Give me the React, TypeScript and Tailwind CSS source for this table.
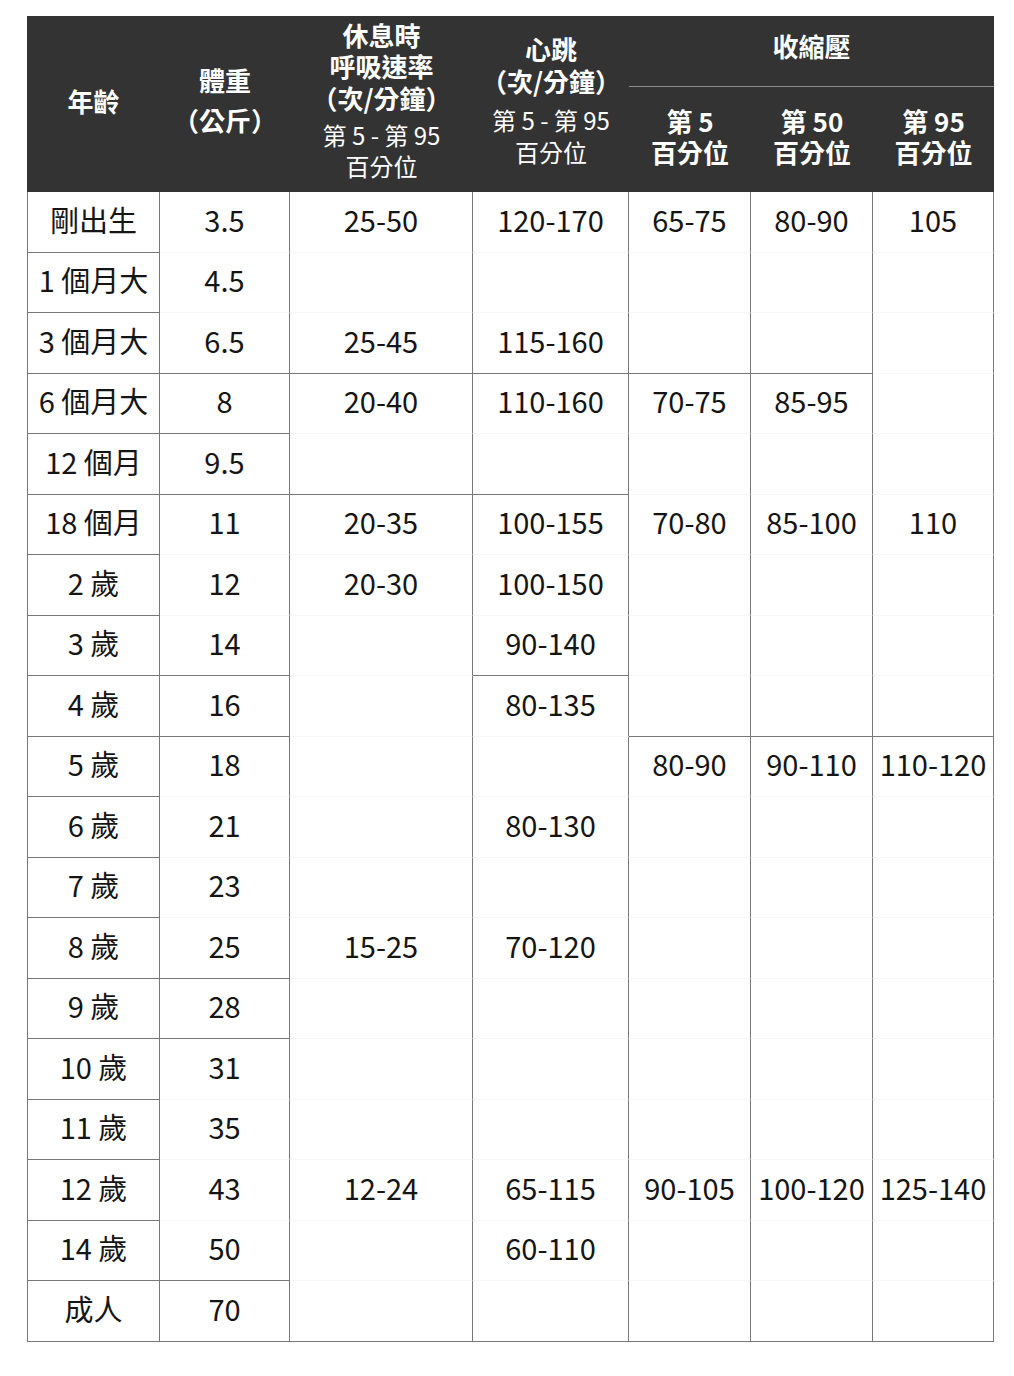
import React from 'react'

type Col = { vals: Record<number, string>; borders: number[] }

const ages = ['剛出生', '1 個月大', '3 個月大', '6 個月大', '12 個月', '18 個月', '2 歲', '3 歲', '4 歲', '5 歲', '6 歲', '7 歲', '8 歲', '9 歲', '10 歲', '11 歲', '12 歲', '14 歲', '成人']
const weights = ['3.5', '4.5', '6.5', '8', '9.5', '11', '12', '14', '16', '18', '21', '23', '25', '28', '31', '35', '43', '50', '70']

const columns: Col[] = [
  { vals: Object.fromEntries(ages.map((a, i) => [i, a])), borders: ages.map((_, i) => i) },
  { vals: Object.fromEntries(weights.map((w, i) => [i, w])), borders: [2, 3, 4, 7, 8, 12, 13, 17, 18] },
  { vals: { 0: '25-50', 2: '25-45', 3: '20-40', 5: '20-35', 6: '20-30', 12: '15-25', 16: '12-24' }, borders: [2, 4, 18] },
  {
    vals: { 0: '120-170', 2: '115-160', 3: '110-160', 5: '100-155', 6: '100-150', 7: '90-140', 8: '80-135', 10: '80-130', 12: '70-120', 16: '65-115', 17: '60-110' },
    borders: [2, 4, 7, 18],
  },
  { vals: { 0: '65-75', 3: '70-75', 5: '70-80', 9: '80-90', 16: '90-105' }, borders: [2, 8, 18] },
  { vals: { 0: '80-90', 3: '85-95', 5: '85-100', 9: '90-110', 16: '100-120' }, borders: [2, 8, 18] },
  { vals: { 0: '105', 5: '110', 9: '110-120', 16: '125-140' }, borders: [8, 18] },
]

const th = 'bg-[#333333] text-white flex flex-col items-center justify-center text-center'

export default function App() {
  return (
    <div className="min-h-[1376px] bg-white pt-[16px] pl-[27px] font-['Noto_Sans_CJK_TC','Noto_Sans',sans-serif]">
      <div className="grid w-[967px] grid-cols-[133px_130px_183px_156px_122px_122px_121px] grid-rows-[71px_105px_repeat(19,60.5px)]">
        {/* header */}
        <div className={`${th} row-span-2 pb-[8px] text-[26px] font-bold`}>年齡</div>
        <div className={`${th} row-span-2 pb-[8px] text-[26px] font-bold leading-[40px]`}>
          <span>體重</span>
          <span>（公斤）</span>
        </div>
        <div className={`${th} row-span-2 pb-[8px]`}>
          <div className="text-[26px] font-bold leading-[31.5px]">
            <div>休息時</div>
            <div>呼吸速率</div>
            <div>（次/分鐘）</div>
          </div>
          <div className="mt-[6px] text-[24px] leading-[31px]">
            <div>第 5 - 第 95</div>
            <div>百分位</div>
          </div>
        </div>
        <div className={`${th} row-span-2 pb-[8px]`}>
          <div className="text-[26px] font-bold leading-[32px]">
            <div>心跳</div>
            <div>（次/分鐘）</div>
          </div>
          <div className="mt-[7px] text-[24px] leading-[32px]">
            <div>第 5 - 第 95</div>
            <div>百分位</div>
          </div>
        </div>
        <div className={`${th} col-span-3 border-b border-b-[#8c8c8c] pb-[12px] text-[26px] font-bold`}>收縮壓</div>
        {['第 5', '第 50', '第 95'].map((p) => (
          <div key={p} className={`${th} pb-[8px] text-[26px] font-bold leading-[31px]`}>
            <div>{p}</div>
            <div>百分位</div>
          </div>
        ))}

        {/* body */}
        {ages.map((_, r) =>
          columns.map((col, c) => {
            const strong = col.borders.includes(r)
            return (
              <div
                key={`${r}-${c}`}
                className={`flex items-center justify-center border-r border-b border-r-[#777777] pb-[5px] text-[29px] text-[#151515] ${
                  strong ? 'border-b-[#777777]' : 'border-b-[#f7f7f7]'
                } ${c === 0 ? 'border-l border-l-[#777777]' : ''}`}
              >
                {col.vals[r] ?? ''}
              </div>
            )
          })
        )}
      </div>
    </div>
  )
}
